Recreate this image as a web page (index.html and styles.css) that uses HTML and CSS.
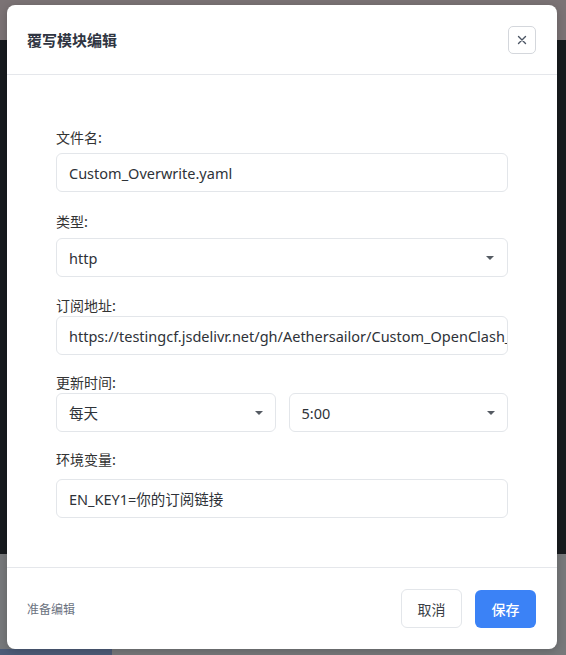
FILE: index.html
```html
<!DOCTYPE html>
<html lang="zh-CN">
<head>
<meta charset="utf-8">
<title>覆写模块编辑</title>
<link rel="stylesheet" href="styles.css">
</head>
<body>
<div class="backdrop-strip"></div>
<div class="modal">
  <div class="modal-header">
    <h2 class="modal-title">覆写模块编辑</h2>
    <button class="close-btn" aria-label="关闭">
      <svg width="10" height="10" viewBox="0 0 10 10"><path d="M1.5 1.5 L8.5 8.5 M8.5 1.5 L1.5 8.5" stroke="#4b5563" stroke-width="1.4" stroke-linecap="round"/></svg>
    </button>
  </div>
  <div class="modal-body">
    <div class="group gap-xl">
      <div class="label">文件名:</div>
      <div class="field">Custom_Overwrite.yaml</div>
    </div>
    <div class="group gap-lg">
      <div class="label label-mid">类型:</div>
      <div class="field select">http<span class="caret"></span></div>
    </div>
    <div class="group">
      <div class="label label-tight">订阅地址:</div>
      <div class="field clip">https://testingcf.jsdelivr.net/gh/Aethersailor/Custom_OpenClash_Rules/main/cfg/Custom_Overwrite.yaml</div>
    </div>
    <div class="group">
      <div class="label label-tight">更新时间:</div>
      <div class="pair">
        <div class="field select">每天<span class="caret"></span></div>
        <div class="field select">5:00<span class="caret"></span></div>
      </div>
    </div>
    <div class="group last">
      <div class="label label-loose">环境变量:</div>
      <div class="field">EN_KEY1=你的订阅链接</div>
    </div>
  </div>
  <div class="modal-footer">
    <span class="status">准备编辑</span>
    <div class="actions">
      <button class="btn btn-cancel">取消</button>
      <button class="btn btn-save">保存</button>
    </div>
  </div>
</div>
</body>
</html>
```

FILE: styles.css
```css
* { box-sizing: border-box; }
html, body { margin: 0; padding: 0; }
body {
  width: 566px;
  height: 655px;
  overflow: hidden;
  position: relative;
  font-family: "Noto Sans", "Noto Sans CJK SC", sans-serif;
  background: linear-gradient(to bottom,
    #7b7375 0px, #7b7375 40px,
    #171b1e 40px, #171b1e 554px,
    #77797b 554px, #77797b 655px);
  padding: 5px 9px 6px 7px;
}
.backdrop-strip {
  position: absolute;
  left: 0;
  bottom: 0;
  width: 112px;
  height: 6px;
  background: #4d5c78;
}
.modal {
  position: relative;
  width: 550px;
  height: 644px;
  background: #ffffff;
  border-radius: 8px;
  display: flex;
  flex-direction: column;
  box-shadow: 0 2px 10px rgba(0,0,0,0.2);
}
.modal-header {
  height: 70px;
  border-bottom: 1px solid #e5e7eb;
  display: flex;
  align-items: center;
  justify-content: space-between;
  padding: 0 21px 0 20px;
}
.modal-title {
  margin: 0;
  font-family: "Noto Sans CJK SC", sans-serif;
  font-size: 15px;
  font-weight: 700;
  color: #2f3542;
  line-height: 20px;
}
.close-btn {
  width: 28px;
  height: 28px;
  border: 1px solid #d4d7dc;
  border-radius: 5px;
  background: #fff;
  display: flex;
  align-items: center;
  justify-content: center;
  padding: 0;
}
.modal-body {
  flex: 1;
  padding: 52px 49px 0 49px;
}
.group { margin-bottom: 17px; }
.group.gap-xl { margin-bottom: 19px; }
.group.gap-lg { margin-bottom: 18px; }
.group.last { margin-bottom: 0; }
.label {
  font-size: 14px;
  line-height: 20px;
  color: #333;
  margin-bottom: 6px;
  font-family: "Noto Sans CJK SC", sans-serif;
}
.label-mid { margin-bottom: 7px; }
.label-tight { margin-bottom: 1px; }
.label-loose { margin-bottom: 10px; }
.field {
  position: relative;
  height: 39px;
  border: 1px solid #e3e6ea;
  border-radius: 6px;
  padding: 0 12px;
  display: flex;
  align-items: center;
  font-size: 14.5px;
  color: #2e3238;
  white-space: nowrap;
  overflow: hidden;
  background: #fff;
}
.clip { padding-right: 0; }
.caret {
  position: absolute;
  right: 13px;
  top: 50%;
  margin-top: -2px;
  width: 0;
  height: 0;
  border-left: 4px solid transparent;
  border-right: 4px solid transparent;
  border-top: 4px solid #555b63;
}
.pair {
  display: grid;
  grid-template-columns: 1fr 1fr;
  gap: 13px;
}
.pair .caret { right: 12px; }
.modal-footer {
  height: 82px;
  border-top: 1px solid #e5e7eb;
  display: flex;
  align-items: center;
  justify-content: space-between;
  padding: 0 21px 0 20px;
}
.status {
  font-size: 12px;
  color: #6b7280;
  font-family: "Noto Sans CJK SC", sans-serif;
}
.actions { display: flex; gap: 13px; align-items: center; }
.btn {
  width: 61px;
  height: 39px;
  border-radius: 6px;
  font-size: 14px;
  font-family: "Noto Sans CJK SC", sans-serif;
  cursor: pointer;
}
.btn-cancel {
  background: #fff;
  border: 1px solid #e3e6ea;
  color: #3a3f47;
}
.btn-save {
  height: 38px;
  background: #3b82f6;
  border: none;
  color: #fff;
  font-weight: 500;
}
```
